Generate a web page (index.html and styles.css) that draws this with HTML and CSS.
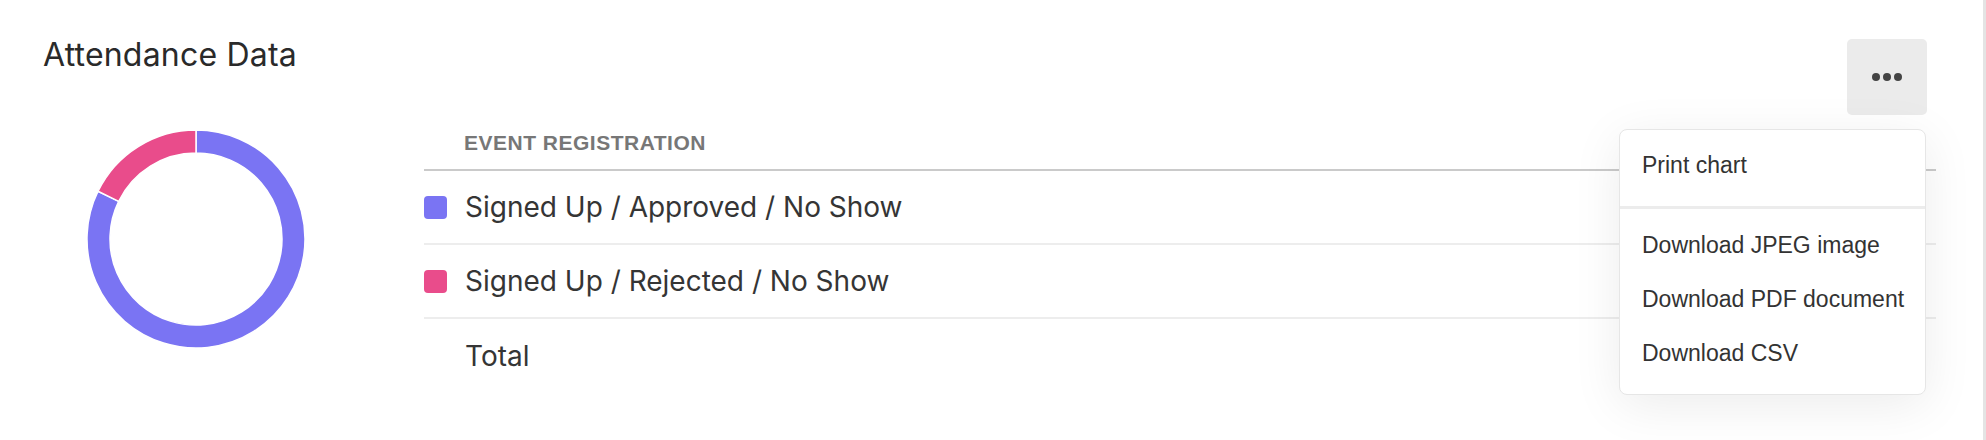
FILE: index.html
```html
<!DOCTYPE html>
<html lang="en">
<head>
<meta charset="utf-8">
<title>Attendance Data</title>
<link rel="stylesheet" href="styles.css">
</head>
<body>
<div class="card">
  <div class="card-head">
    <h2 class="title">Attendance Data</h2>
    <button class="more-btn" type="button" aria-label="Chart menu">
      <span class="dot"></span><span class="dot"></span><span class="dot"></span>
    </button>
  </div>
  <div class="card-body">
    <div class="chart-col">
      <svg class="donut" width="220" height="220" viewBox="0 0 220 220">
        <path class="slice slice-approved" d="M 110 1 A 109 109 0 1 1 12.03 62.21 L 32.70 72.30 A 86 86 0 1 0 110 24 Z"/>
        <path class="slice slice-rejected" d="M 12.03 62.21 A 109 109 0 0 1 110 1 L 110 24 A 86 86 0 0 0 32.70 72.30 Z"/>
      </svg>
    </div>
    <div class="data-table">
      <div class="th">EVENT REGISTRATION</div>
      <div class="row">
        <span class="swatch swatch-approved"></span>
        <span class="label">Signed Up / Approved / No Show</span>
      </div>
      <div class="row">
        <span class="swatch swatch-rejected"></span>
        <span class="label">Signed Up / Rejected / No Show</span>
      </div>
      <div class="row row-total">
        <span class="swatch swatch-none"></span>
        <span class="label">Total</span>
      </div>
    </div>
  </div>
  <div class="menu">
    <div class="menu-item">Print chart</div>
    <div class="menu-sep"></div>
    <div class="menu-item">Download JPEG image</div>
    <div class="menu-item">Download PDF document</div>
    <div class="menu-item">Download CSV</div>
  </div>
</div>
</body>
</html>
```

FILE: styles.css
```css
* {
  box-sizing: border-box;
}

html,
body {
  margin: 0;
  padding: 0;
  background: #ffffff;
}

.card {
  position: relative;
  height: 440px;
  padding: 39px 47px 0 43px;
  border-right: 3px solid #e4e4e4;
  background: #ffffff;
  font-family: Inter, "Liberation Sans", Arial, sans-serif;
  color: #333333;
}

.card-head {
  display: flex;
  justify-content: space-between;
  align-items: flex-start;
}

.title {
  margin: 0;
  font-size: 32px;
  line-height: 32px;
  font-weight: 400;
  letter-spacing: 0.2px;
  color: #2a2a2a;
}

.more-btn {
  width: 80px;
  height: 76px;
  margin-right: 9px;
  border: 0;
  border-radius: 5px;
  background: #ebebeb;
  display: flex;
  align-items: center;
  justify-content: center;
  gap: 3px;
  padding: 0;
}

.dot {
  width: 8px;
  height: 8px;
  border-radius: 50%;
  background: #444444;
}

.card-body {
  display: grid;
  grid-template-columns: 381px 1fr;
}

.chart-col {
  padding: 14px 0 0 43px;
}

.donut {
  display: block;
}

.slice {
  stroke: #ffffff;
  stroke-width: 1.5;
  stroke-linejoin: round;
}

.slice-approved {
  fill: #7a74f3;
}

.slice-rejected {
  fill: #e94c8b;
}

.data-table {
  display: flex;
  flex-direction: column;
}

.th {
  padding: 17px 0 16px 40px;
  font-family: "Liberation Sans", Arial, sans-serif;
  font-size: 21px;
  line-height: 21px;
  font-weight: 700;
  letter-spacing: 0.5px;
  color: #777777;
  border-bottom: 2px solid #cacaca;
}

.row {
  display: flex;
  align-items: center;
  gap: 18px;
  height: 74px;
  border-bottom: 2px solid #ededed;
}

.row-total {
  border-bottom: 0;
}

.swatch {
  width: 23px;
  height: 23px;
  border-radius: 4px;
  flex: none;
}

.swatch-approved {
  background: #7a74f3;
}

.swatch-rejected {
  background: #e94c8b;
}

.swatch-none {
  background: transparent;
}

.label {
  font-size: 28px;
  color: #353535;
}

.menu {
  position: absolute;
  top: 129px;
  right: 57px;
  width: 307px;
  padding: 8px 0 14px;
  border: 1px solid #e6e6e6;
  border-radius: 8px;
  background: #ffffff;
  box-shadow: 0 10px 50px rgba(0, 0, 0, 0.08);
  font-family: "Liberation Sans", Arial, Helvetica, sans-serif;
}

.menu-item {
  padding-left: 22px;
  font-size: 23px;
  line-height: 54px;
  color: #333333;
}

.menu-sep {
  height: 3px;
  margin: 14px 0 9px;
  background: #ececec;
}
```
